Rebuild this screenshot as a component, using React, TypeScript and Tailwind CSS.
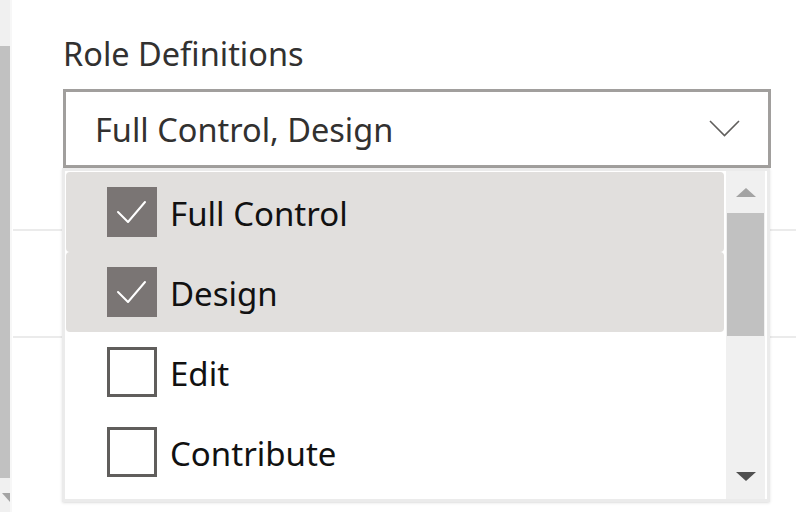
import React from "react";

const font = { fontFamily: '"Noto Sans", "Open Sans", sans-serif' };

interface Role {
  label: string;
  checked: boolean;
}

const roles: Role[] = [
  { label: "Full Control", checked: true },
  { label: "Design", checked: true },
  { label: "Edit", checked: false },
  { label: "Contribute", checked: false },
];

function CheckBox({ checked }: { checked: boolean }) {
  if (checked) {
    return (
      <div className="flex h-[50px] w-[50px] shrink-0 items-center justify-center bg-[#7a7574]">
        <svg width="50" height="50" viewBox="0 0 50 50" fill="none">
          <polyline
            points="11,25 21,35 38,15"
            stroke="white"
            strokeWidth="2"
            strokeLinecap="round"
            strokeLinejoin="round"
          />
        </svg>
      </div>
    );
  }
  return (
    <div className="h-[50px] w-[50px] shrink-0 border-[3px] border-[#605e5c] bg-white" />
  );
}

function RoleOption({ role }: { role: Role }) {
  return (
    <div
      className={`flex h-[80px] items-center gap-[13px] rounded-[4px] pl-[41px] ${
        role.checked ? "bg-[#e1dfdd]" : "bg-white"
      }`}
    >
      <CheckBox checked={role.checked} />
      <span className="pt-[3px] text-[33px] leading-none text-[#111]">
        {role.label}
      </span>
    </div>
  );
}

function ListScrollbar() {
  return (
    <div className="flex w-[39px] shrink-0 flex-col bg-[#f0f0f0]">
      {/* up arrow */}
      <div className="flex h-[42px] items-center justify-center">
        <div className="h-0 w-0 border-x-[10px] border-b-[9px] border-x-transparent border-b-[#a3a3a3]" />
      </div>
      <div className="mx-[1px] h-[123px] bg-[#c1c1c1]" />
      <div className="flex-1" />
      {/* down arrow */}
      <div className="flex h-[40px] items-center justify-center pb-[6px]">
        <div className="h-0 w-0 border-x-[10px] border-t-[9px] border-x-transparent border-t-[#505050]" />
      </div>
    </div>
  );
}

export default function App() {
  return (
    <div
      className="relative flex h-[512px] w-[796px] overflow-hidden bg-white"
      style={font}
    >
      {/* page scrollbar */}
      <div className="flex w-[10px] shrink-0 flex-col bg-[#f0f0f0]">
        <div className="h-[46px]" />
        <div className="flex-1 bg-[#c1c1c1]" />
        <div className="flex h-[34px] items-start justify-end pt-[15px]">
          <div className="h-0 w-0 border-l-[8px] border-t-[9px] border-l-transparent border-t-[#a3a3a3]" />
        </div>
      </div>
      <div className="w-[2px] shrink-0 bg-[#f7f7f7]" />

      {/* main form */}
      <div className="relative flex-1">
        <div className="pl-[51px] pt-[34px]">
          <div className="text-[32.5px] leading-[40px] text-[#323130]">
            Role Definitions
          </div>
          <div className="mt-[15px] flex h-[79px] w-[708px] items-center justify-between border-[3px] border-[#a19f9d] pl-[29px] pr-[28px]">
            <span className="pt-[4px] text-[32.5px] leading-none text-[#323130]">
              Full Control, Design
            </span>
            <svg width="31" height="17" viewBox="0 0 31 17" fill="none">
              <polyline
                points="1,1 15.5,15.5 30,1"
                stroke="#605e5c"
                strokeWidth="1.6"
              />
            </svg>
          </div>
        </div>

        {/* rows behind the open list */}
        <div className="ml-[1px] mt-[61px] h-[2px] bg-[#ebebeb]" />
        <div className="ml-[1px] mt-[105px] h-[2px] bg-[#ebebeb]" />

        {/* dropdown list */}
        <div className="absolute left-[50px] top-[168px] flex h-[334px] w-[708px] border-[3px] border-[#ebebeb] bg-white shadow-sm">
          <div className="flex-1 pl-[1px] pr-[2px] pt-[1px]">
            {roles.map((role) => (
              <RoleOption key={role.label} role={role} />
            ))}
          </div>
          <ListScrollbar />
          <div className="w-[2px] shrink-0 bg-white" />
        </div>
      </div>
    </div>
  );
}
